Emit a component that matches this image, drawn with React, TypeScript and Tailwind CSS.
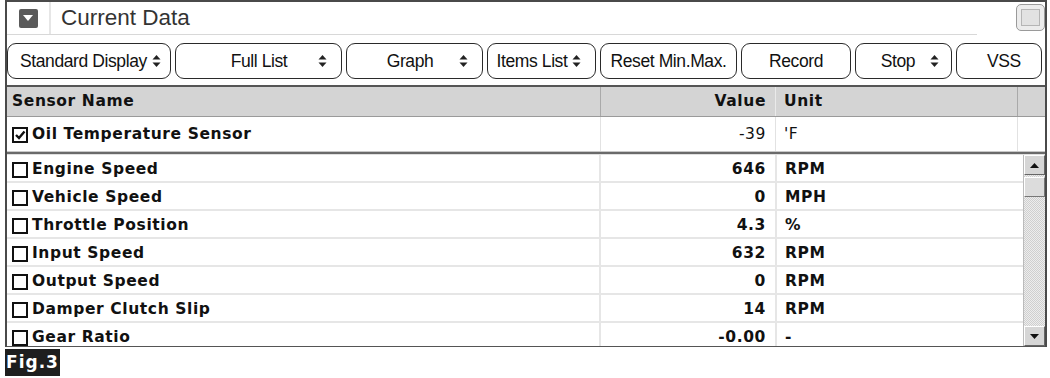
import React from 'react';

const rows = [
  { name: 'Engine Speed', value: '646', unit: 'RPM' },
  { name: 'Vehicle Speed', value: '0', unit: 'MPH' },
  { name: 'Throttle Position', value: '4.3', unit: '%' },
  { name: 'Input Speed', value: '632', unit: 'RPM' },
  { name: 'Output Speed', value: '0', unit: 'RPM' },
  { name: 'Damper Clutch Slip', value: '14', unit: 'RPM' },
  { name: 'Gear Ratio', value: '-0.00', unit: '-' },
];

const buttons = [
  { label: 'Standard Display', arrow: true, w: 'w-[164px]', pad: 'pl-[12px] pr-[12px]', gap: 'gap-[5px]' },
  { label: 'Full List', arrow: true, w: 'w-[167px]', pad: 'pl-[24px] pr-[14px]', gap: 'gap-0' },
  { label: 'Graph', arrow: true, w: 'w-[137px]', pad: 'pl-[14px] pr-[14px]', gap: 'gap-0' },
  { label: 'Items List', arrow: true, w: 'w-[109px]', pad: 'pl-[8px] pr-[14px]', gap: 'gap-[4px]' },
  { label: 'Reset Min.Max.', arrow: false, w: 'w-[137px]', pad: 'px-[6px]', gap: 'gap-0' },
  { label: 'Record', arrow: false, w: 'w-[110px]', pad: 'px-[6px]', gap: 'gap-0' },
  { label: 'Stop', arrow: true, w: 'w-[97px]', pad: 'pl-[20px] pr-[12px]', gap: 'gap-[10px]' },
  { label: 'VSS', arrow: false, w: 'w-[86px]', pad: 'pl-[16px] pr-[6px]', gap: 'gap-0' },
];

function SortArrows() {
  return (
    <svg width="9" height="14" viewBox="0 0 9 14" className="shrink-0">
      <path d="M4.5 1 L8.5 5.5 L0.5 5.5 Z" fill="#222" />
      <path d="M4.5 13 L8.5 8.5 L0.5 8.5 Z" fill="#222" />
    </svg>
  );
}

function Checkbox({ checked }: { checked?: boolean }) {
  return (
    <svg width="16" height="16" viewBox="0 0 16 16" className="shrink-0">
      <rect x="1" y="1" width="14" height="14" fill="white" stroke="#111" strokeWidth="2" />
      {checked && <path d="M4 8 L7 11 L12.5 4.5" fill="none" stroke="#111" strokeWidth="2.4" />}
    </svg>
  );
}

function ScrollArrow({ up }: { up?: boolean }) {
  return (
    <div className="h-[20px] w-full flex items-center justify-center bg-[#d6d6d6] border border-t-white border-l-white border-r-[#666] border-b-[#666]">
      <svg width="9" height="5" viewBox="0 0 9 5">
        <path d={up ? 'M4.5 0 L9 5 L0 5 Z' : 'M0 0 L9 0 L4.5 5 Z'} fill="#111" />
      </svg>
    </div>
  );
}

export default function App() {
  const cell = "font-['DejaVu_Sans',sans-serif] font-bold text-[15.5px] tracking-[0.6px] text-[#111]";

  return (
    <div className="w-[1050px] h-[378px] bg-white pl-[5px] pr-[3px] font-['Liberation_Sans',Arial,sans-serif]">
      <div className="border-t-2 border-l-2 border-r-2 border-[#4a4a4a]">
        {/* title */}
        <div className="h-[33px] flex">
          <div className="flex flex-1 items-center border-b border-[#d8d8d8]">
            <div className="w-[44px] h-full flex items-center justify-center border-r-2 border-[#e6e6e6]">
              <div className="w-[19px] h-[19px] bg-[#5a5a5a] rounded-[2px] flex items-center justify-center">
                <svg width="10" height="6" viewBox="0 0 10 6">
                  <path d="M0 0 L10 0 L5 6 Z" fill="white" />
                </svg>
              </div>
            </div>
            <span className="pl-[10px] text-[22.5px] text-[#333] leading-none">Current Data</span>
          </div>
          <div className="w-[68px] flex items-start justify-end pt-[2px]">
            <div className="w-[29px] h-[27px] rounded-[5px] border border-[#9a9a9a] bg-[#ececec] flex items-center justify-center">
              <div className="w-[19px] h-[17px] border border-[#b5b5b5] bg-[#e2e2e2]" />
            </div>
          </div>
        </div>

        {/* buttons */}
        <div className="flex gap-[4px] pt-[8px] pb-[6px] pr-[1px]">
          {buttons.map((b) => (
            <div
              key={b.label}
              className={`${b.w} ${b.pad} ${b.gap} h-[36px] flex items-center rounded-[9px] border-[1.5px] border-[#2a2a2a] text-[17.5px] text-[#111] font-['Liberation_Sans_Narrow','Liberation_Sans',sans-serif] tracking-[-0.4px]`}
            >
              <span className="flex-1 text-center whitespace-nowrap">{b.label}</span>
              {b.arrow && <SortArrows />}
            </div>
          ))}
        </div>

        {/* table */}
        <div className="border-t-2 border-b border-[#555] bg-white">
          <div className={`grid grid-cols-[594px_174px_243px_1fr] h-[30px] bg-[#d4d4d4] border-b border-[#9a9a9a] ${cell}`}>
            <div className="flex items-center pl-[5px] border-r border-[#a9a9a9]">Sensor Name</div>
            <div className="flex items-center justify-end pr-[9px]">Value</div>
            <div className="flex items-center pl-[8px] border-l border-[#eaeaea] border-r border-r-[#a9a9a9]">Unit</div>
            <div />
          </div>
          <div className={`grid grid-cols-[594px_174px_243px_1fr] h-[34px] ${cell}`}>
            <div className="flex items-center gap-[4px] pl-[5px] pt-[1px] border-r border-[#e2e2e2]">
              <Checkbox checked />
              <span>Oil Temperature Sensor</span>
            </div>
            <div className="flex items-center justify-end pr-[9px] pt-[1px] font-normal">-39</div>
            <div className="flex items-center pl-[8px] pt-[1px] border-l border-[#e2e2e2] border-r font-normal">'F</div>
            <div />
          </div>
          <div className="h-[4px] border-t border-[#c8c8c8] bg-[#6a6a6a] border-b border-b-[#e0e0e0]" />
          <div className="flex h-[191px] overflow-hidden">
            <div className="flex-1">
              {rows.map((r) => (
                <div key={r.name} className={`grid grid-cols-[594px_174px_1fr] h-[28px] border-b-2 border-[#e6e6e6] ${cell}`}>
                  <div className="flex items-center gap-[4px] pl-[5px] pt-[3px] border-r-2 border-[#e6e6e6]">
                    <Checkbox />
                    <span>{r.name}</span>
                  </div>
                  <div className="flex items-center justify-end pr-[9px] pt-[3px]">{r.value}</div>
                  <div className="flex items-center pl-[8px] pt-[3px] border-l-2 border-[#e6e6e6]">{r.unit}</div>
                </div>
              ))}
            </div>
            <div className="w-[22px] h-full flex flex-col bg-[repeating-conic-gradient(#cfcfcf_0_25%,#ededed_0_50%)] bg-[length:2px_2px] border-l border-[#bbb]">
              <ScrollArrow up />
              <div className="h-[20px] mt-[2px] bg-[#dcdcdc] border border-t-white border-l-white border-r-[#777] border-b-[#777]" />
              <div className="flex-1" />
              <ScrollArrow />
            </div>
          </div>
        </div>
      </div>

      <div className="mt-[2px] w-[55px] h-[27px] bg-[#1e1e1e] flex items-center justify-center">
        <span className="text-white font-bold text-[17px] tracking-[1px] font-['DejaVu_Sans',sans-serif]">Fig.3</span>
      </div>
    </div>
  );
}
